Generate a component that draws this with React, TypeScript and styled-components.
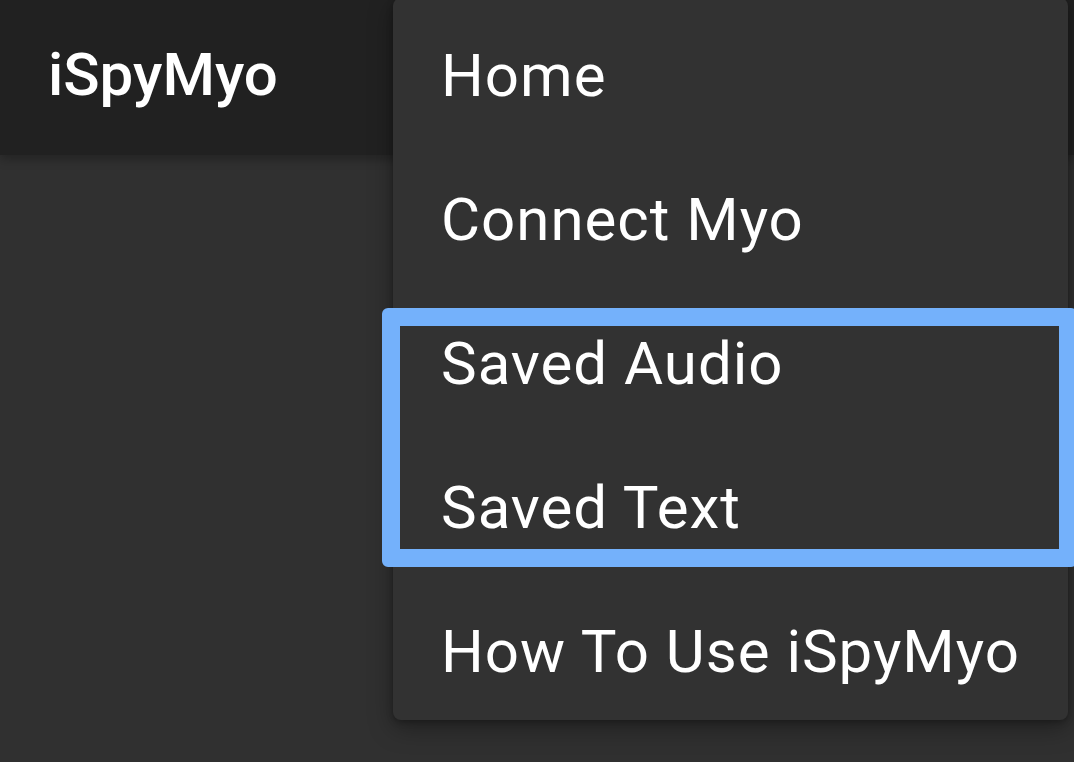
import React from "react";
import styled, { createGlobalStyle } from "styled-components";

const Global = createGlobalStyle`
  html, body { margin: 0; padding: 0; background: #303030; }
  body { font-family: Roboto, "Noto Sans", sans-serif; -webkit-font-smoothing: antialiased; }
`;

const Screen = styled.div`
  position: relative;
  width: 1074px;
  height: 762px;
  overflow: hidden;
  background: #303030;
`;

const AppBar = styled.header`
  box-sizing: border-box;
  height: 155px;
  padding: 39px 0 0 48px;
  background: #212121;
  box-shadow: 0 4px 10px rgba(0, 0, 0, 0.28);
`;

const Title = styled.h1`
  margin: 0;
  font-size: 60px;
  font-weight: 500;
  line-height: normal;
  color: #ffffff;
`;

const Menu = styled.nav`
  position: absolute;
  left: 393px;
  top: -2px;
  width: 675px;
  padding-top: 2px;
  background: #323232;
  border-radius: 8px;
  box-shadow: 0 8px 24px rgba(0, 0, 0, 0.35), 0 2px 6px rgba(0, 0, 0, 0.25);
  display: flex;
  flex-direction: column;
`;

const Item = styled.div`
  box-sizing: border-box;
  height: 144px;
  padding: 40px 0 0 48px;
  font-size: 60px;
  font-weight: 400;
  letter-spacing: 1px;
  line-height: normal;
  color: #ffffff;
  white-space: nowrap;
`;

const Highlight = styled.div`
  position: absolute;
  left: 382px;
  top: 308px;
  width: 695px;
  height: 259px;
  box-sizing: border-box;
  border: 18px solid #74b1fb;
  border-radius: 6px;
  pointer-events: none;
`;

const items = ["Home", "Connect Myo", "Saved Audio", "Saved Text", "How To Use iSpyMyo"];

export default function App() {
  return (
    <>
      <Global />
      <Screen>
        <AppBar>
          <Title>iSpyMyo</Title>
        </AppBar>
        <Menu>
          {items.map((t) => (
            <Item key={t}>{t}</Item>
          ))}
        </Menu>
        <Highlight />
      </Screen>
    </>
  );
}
